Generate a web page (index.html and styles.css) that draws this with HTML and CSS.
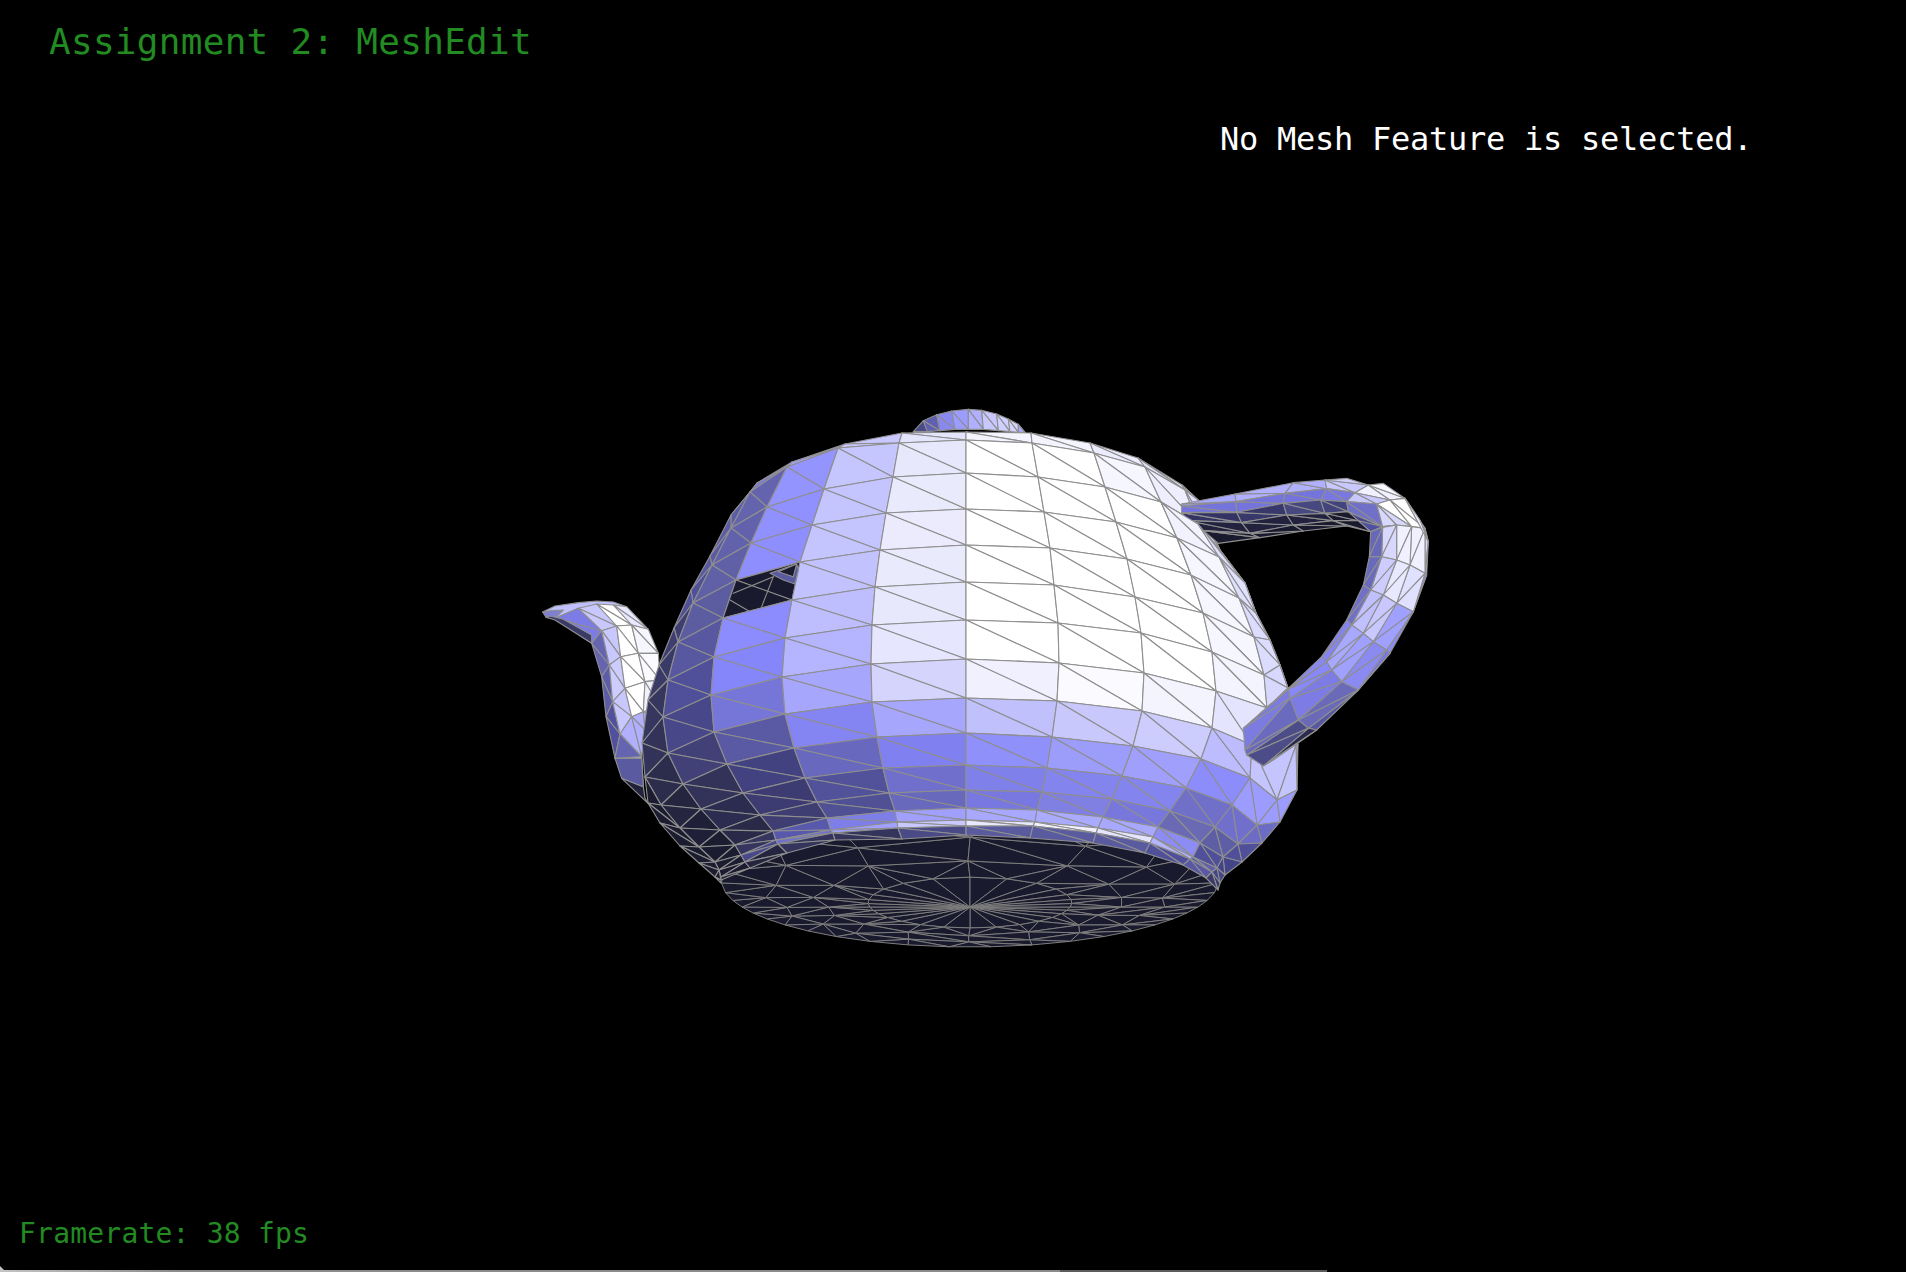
FILE: index.html
```html
<!doctype html>
<html lang="en">
  <head>
    <meta charset="UTF-8" />
    <title>Assignment 2: MeshEdit</title>
    <link rel="stylesheet" href="styles.css">
  </head>

  <body>
    <div class="viewer">
      <svg id="mesh" class="mesh" viewBox="0 0 1906 1272" aria-hidden="true"></svg>
      <div class="hud">
        <h1 class="title">Assignment 2: MeshEdit</h1>
        <p class="status">No Mesh Feature is selected.</p>
        <p class="fps">Framerate: 38 fps</p>
      </div>
      <div class="edge"></div>
    </div>
    <script src="mesh.js"></script>
  </body>
</html>
```

FILE: styles.css
```css
html,
body {
  margin: 0;
  background: #000;
}
.viewer {
  position: relative;
  width: 1906px;
  height: 1272px;
  overflow: hidden;
}
.mesh {
  position: absolute;
  top: 0;
  left: 0;
  width: 1906px;
  height: 1272px;
}
.mesh polygon {
  stroke: #8f8f8f;
  stroke-width: 1.1;
  stroke-linejoin: round;
}
.mesh .base {
  stroke: #7d7d7d;
  stroke-width: 1;
}
.hud {
  position: relative;
  display: flex;
  flex-direction: column;
  height: 1272px;
  box-sizing: border-box;
  padding: 20px 0 20px;
  font-family: "DejaVu Sans Mono", "Liberation Mono", monospace;
}
.title {
  margin: 0 0 0 49px;
  font-size: 36px;
  font-weight: normal;
  line-height: 44px;
  letter-spacing: 0.28px;
  color: #228b22;
}
.status {
  margin: 55px 0 0 1220px;
  font-size: 32px;
  line-height: 40px;
  letter-spacing: -0.26px;
  color: #fff;
}
.fps {
  margin: auto 0 0 19px;
  font-size: 28px;
  line-height: 36px;
  letter-spacing: 0.21px;
  color: #228b22;
}
.edge {
  position: absolute;
  left: 0;
  bottom: 0;
  width: 1327px;
  height: 2px;
  background: linear-gradient(to right, #c4c4c4, #8a8a8a 180px, #8a8a8a 1060px, #5c5c5c 1060px);
}
.edge::before {
  content: "";
  position: absolute;
  left: 0;
  bottom: 2px;
  border-left: 4px solid #c4c4c4;
  border-top: 4px solid transparent;
}
```

FILE: mesh.js
```js
// teapot drawn face by face, the way the viewer shows it
var svg = document.getElementById("mesh");

function poly(pts, fill, cls) {
  var el = document.createElementNS("http://www.w3.org/2000/svg", "polygon");
  el.setAttribute("points", pts.map(function (p) { return p[0] + "," + p[1]; }).join(" "));
  el.setAttribute("fill", fill);
  if (cls) el.setAttribute("class", cls);
  svg.appendChild(el);
}

function quad(a, b, c, d, fill) {
  poly([a, b, c], fill);
  poly([a, c, d], fill);
}

function drawGrid(grid, colors, rowFrom, rowTo, colFrom, colTo) {
  for (var r = rowFrom; r < rowTo; r++) {
    for (var c = colFrom; c < colTo; c++) {
      var fill = "#" + colors[r][c];
      quad(grid[r][c], grid[r][c + 1], grid[r + 1][c + 1], grid[r + 1][c], fill);
    }
  }
}

// crop coordinates (3x) -> page coordinates
function crop(ox, oy, list) {
  return list.map(function (p) { return [ox + p[0] / 3, oy + p[1] / 3]; });
}

/* ---- base disc ---- */
var CX = 970, CY = 907;
function ringPoint(t, th) {
  var s = t * Math.sin(th), c = t * Math.cos(th), k = 1 + 0.4 * s;
  return [CX + (228 * c) / k, CY + (56 * s) / k];
}
function ring(t, n, wobble) {
  var out = [];
  for (var i = 0; i < n; i++) {
    var th = (i / n) * Math.PI * 2;
    th = th - 0.2 * Math.sin(2 * th);
    var j = wobble * Math.sin(i * 12.9898) * 0.5;
    out.push(ringPoint(t + wobble * Math.cos(i * 78.233) * 0.35, th + j / 3));
  }
  return out;
}
function stitch(a, b) {
  var i = 0, j = 0;
  while (i < a.length || j < b.length) {
    var ai = a[i % a.length], bj = b[j % b.length];
    if (j >= b.length || (i < a.length && i / a.length <= j / b.length)) {
      poly([ai, a[(i + 1) % a.length], bj], "#1a1a2e", "base");
      i++;
    } else {
      poly([ai, b[(j + 1) % b.length], bj], "#1a1a2e", "base");
      j++;
    }
  }
}
var rings = [ring(0.44, 28, 0), ring(0.64, 16, 0.07), ring(0.83, 20, 0.07), ring(1, 34, 0)];
rings[0].forEach(function (p, i) {
  poly([[CX, CY], p, rings[0][(i + 1) % 28]], "#1a1a2e", "base");
});
stitch(rings[0], rings[1]);
stitch(rings[1], rings[2]);
stitch(rings[2], rings[3]);

/* ---- spout, behind the body ---- */
var sp = crop(530, 590, [
  [75, 85], [145, 55], [200, 42], [250, 45], [290, 50],
  [185, 160], [215, 122], [260, 108], [305, 105], [355, 118],
  [215, 260], [238, 225], [272, 200], [325, 190], [385, 190],
  [228, 380], [248, 335], [285, 295], [345, 275], [390, 270],
  [255, 505], [270, 432], [305, 380], [340, 365], [390, 350],
  [340, 625], [340, 590], [335, 500], [345, 420], [390, 400]
]);
var spoutGrid = [];
for (var i = 0; i < 6; i++) spoutGrid.push(sp.slice(i * 5, i * 5 + 5));
var spoutColors = [
  ["7c7ce4", "c8c8ff", "ffffff", "e8e8ff"],
  ["6464b0", "c8c8ff", "ffffff", "f6f6ff"],
  ["5c5ca8", "ccccff", "ffffff", "fafaff"],
  ["50509c", "c8c8ff", "ffffff", "f0f0ff"],
  ["5a5aa0", "b0b0ff", "b0b0ff", "b0b0ff"]
];
poly(crop(530, 590, [[38, 66], [75, 48], [145, 38], [200, 33], [250, 36], [290, 50], [145, 55], [75, 85]]), "#c0c0ff");
poly(crop(530, 590, [[38, 66], [48, 82], [75, 85], [100, 60], [60, 62]]), "#8080d0");
drawGrid(spoutGrid, spoutColors, 0, 5, 0, 4);
poly(crop(530, 590, [[48, 82], [75, 90], [185, 160], [185, 135], [100, 88], [60, 78]]), "#3a3a66");
poly(crop(530, 590, [[270, 432], [335, 500], [255, 505]]), "#6464b0");
poly(crop(530, 590, [[275, 565], [340, 590], [345, 625], [354, 640]]), "#22223c");
poly(crop(530, 590, [[255, 505], [335, 505], [340, 590], [275, 565]]), "#5a5aa0");

/* ---- lid knob ---- */
var knobTop = crop(840, 400, [[220, 95], [250, 62], [290, 44], [335, 33], [385, 28], [425, 31], [470, 42], [505, 57], [535, 73], [555, 97]]);
var knobBot = crop(840, 400, [[220, 97], [262, 95], [300, 92], [345, 88], [385, 88], [430, 88], [475, 92], [510, 95], [535, 97], [555, 97]]);
var knobFill = ["4a4a88", "6060b0", "8888f0", "9c9cff", "b0b0ff", "c8c8ff", "d0d0ff", "d4d4ff", "a8a8ff"];
for (var k = 0; k < 9; k++) {
  quad(knobTop[k], knobTop[k + 1], knobBot[k + 1], knobBot[k], "#" + knobFill[k]);
}

/* ---- body: 16 rings of 12 points, left silhouette to right silhouette ---- */
var cols = [
  [[732,515],[731,515],[710,556],[691,590],[674,628],[659,665],[648,700],[642,743],[645,777],[661,805],[680,828],[699,847],[715,862],[719,870],[721,877],[721,880]],
  [[757,483],[750,492],[731,528],[712,565],[693,603],[678,642],[668,680],[663,717],[668,753],[683,784],[701,809],[720,830],[735,845],[741,855],[745,862],[750,868]],
  [[792,462],[787,467],[767,507],[751,543],[736,580],[723,618],[714,657],[711,695],[714,732],[727,764],[743,793],[760,815],[773,831],[776,840],[778,844],[787,853]],
  [[845,444],[838,448],[824,489],[812,525],[800,562],[792,600],[785,638],[782,677],[785,714],[794,748],[805,778],[817,802],[827,818],[831,830],[833,833],[835,840]],
  [[902,433],[899,443],[893,477],[886,513],[880,550],[875,587],[872,625],[871,664],[872,702],[877,737],[883,768],[889,793],[895,811],[897,822],[898,828],[902,839]],
  [[966,432],[966,440],[966,473],[966,509],[966,545],[966,582],[966,620],[966,659],[966,698],[966,733],[966,765],[966,790],[966,808],[966,820],[966,826],[966,835]],
  [[1031,433],[1032,443],[1038,477],[1044,512],[1050,548],[1054,585],[1058,623],[1059,663],[1057,701],[1052,737],[1047,768],[1042,792],[1037,810],[1035,822],[1033,826],[1030,838]],
  [[1090,443],[1094,453],[1105,487],[1116,522],[1127,559],[1135,597],[1141,633],[1144,673],[1142,711],[1133,746],[1122,776],[1112,799],[1103,817],[1098,828],[1096,833],[1093,843]],
  [[1138,458],[1145,467],[1161,502],[1177,538],[1191,575],[1203,613],[1212,652],[1216,691],[1212,728],[1201,759],[1186,788],[1170,811],[1158,827],[1153,837],[1150,843],[1145,853]],
  [[1182,485],[1185,490],[1198,524],[1219,557],[1239,598],[1254,637],[1264,675],[1267,708],[1252,745],[1250,778],[1232,805],[1215,827],[1200,843],[1193,857],[1190,859],[1183,865]],
  [[1198,500],[1198,500],[1220,550],[1245,583],[1256,613],[1270,640],[1280,665],[1288,688],[1296,745],[1277,800],[1257,825],[1238,844],[1223,857],[1217,868],[1212,872],[1206,878]],
  [[1198,500],[1198,500],[1220,550],[1245,583],[1256,613],[1270,640],[1280,665],[1288,688],[1298,745],[1297,790],[1280,822],[1262,843],[1242,862],[1225,875],[1220,883],[1218,890]]
];
var grid = [];
for (var r = 0; r < 16; r++) {
  grid.push(cols.map(function (col) { return col[r]; }));
}
var shades = [
  ["5f5fa8","7c7cd6","a2a2ff","c8c8ff","e4e4fd","f4f4ff","f4f4ff","ececff","e4e4ff","d8d8ff","d8d8ff"],
  ["5c5ca6","6464ae","9494ff","c6c6ff","e8e8fd","ffffff","ffffff","f6f6ff","eeeeff","e0e0ff","e0e0ff"],
  ["5a5aa4","6262ac","9090ff","c4c4ff","eaeafd","ffffff","ffffff","ffffff","f2f2ff","dedeff","dedeff"],
  ["50509a","6060a6","8e8eff","c4c4ff","ebebfd","ffffff","ffffff","ffffff","f6f6ff","e0e0ff","e0e0ff"],
  ["3e3e72","5c5ca0","1a1a2e","c2c2ff","eaeafd","ffffff","ffffff","ffffff","f6f6ff","dcdcff","dcdcff"],
  ["3a3a68","5858a0","8c8cff","bebeff","e8e8fd","ffffff","ffffff","ffffff","f6f6ff","dcdcff","dcdcff"],
  ["36365f","50509a","8686fb","b4b4ff","e6e6fe","ffffff","ffffff","ffffff","f4f4ff","d8d8ff","d8d8ff"],
  ["33335a","47478a","7676d8","a6a6fc","d4d4fc","f0f0ff","fafaff","f4f4ff","e4e4ff","d4d4ff","d4d4ff"],
  ["2c2c4c","414178","5a5aa4","8484f2","a6a6fc","c0c0fc","c8c8fd","ccccfd","bcbcff","c4c4ff","c4c4ff"],
  ["25253f","33335a","424280","6868be","8080f0","9090fa","9c9cfa","a0a0fc","8c8cfb","9c9cff","9c9cff"],
  ["1f1f38","2c2c50","3c3c72","52529a","7070cc","8080ea","8484ee","8484ee","7070c8","7070cc","6c6cc4"],
  ["1c1c30","2a2a48","3e3e72","505094","6868bc","7878e0","8080e2","7878dc","6a6ab4","5e5ea4","50509a"],
  ["1c1c30","353560","5858ac","7e7ee8","a0a0fc","a8a8ff","aaaaff","a8a8ff","8c8cf4","50509a","444488"],
  ["1c1c30","48488a","7070c8","a0a0ff","c8c8ff","e8e8ff","f0f0ff","e4e4ff","b4b4ff","6060aa","444488"],
  ["1c1c30","252540","34345c","34345c","4a4a86","5a5a9e","5a5a9e","5a5a9e","50509a","5858a4","3a3a6a"]
];
drawGrid(grid, shades, 0, 15, 0, 11);

// lower left lip outside the body's outermost ring
var lipOuter = [[645,777],[648,803],[660,823],[680,846],[699,863],[715,877],[721,883]];
var lipInner = [[645,777],[661,805],[680,828],[699,847],[715,862],[719,870],[721,880]];
for (var m = 0; m < 6; m++) {
  quad(lipOuter[m], lipInner[m], lipInner[m + 1], lipOuter[m + 1], "#1c1c30");
}

// the far wall seen through the missing faces
[[[610, 580], [730, 530]], [[695, 620], [730, 530]], [[655, 632], [600, 600]]].forEach(function (l) {
  poly(crop(530, 400, l), "none");
});
poly(crop(530, 400, [[720, 520], [800, 492], [805, 510], [795, 552], [760, 540]]), "#5a5aa0");
poly(crop(530, 400, [[745, 515], [800, 492], [790, 530]]), "#1a1a2e");

/* ---- handle ---- */
var handle = [
  [[695,312],[695,318],[695,338],[715,362],[760,392],[805,430]],
  [[855,282],[858,305],[860,337],[875,368],[900,400],[930,413]],
  [[1030,248],[1005,280],[1000,310],[1010,345],[1030,375],[1060,393]],
  [[1125,240],[1130,266],[1112,300],[1125,340],[1150,362],[1190,378]],
  [[1255,255],[1215,278],[1190,305],[1195,335],[1225,362],[1262,395]],
  [[1365,295],[1320,300],[1280,312],[1298,380],[1298,380],[1262,395]],
  [[1435,425],[1425,385],[1385,380],[1340,375],[1298,382],[1262,395]],
  [[1430,525],[1425,520],[1380,495],[1340,480],[1295,470],[1258,470]],
  [[1390,635],[1390,635],[1340,610],[1300,585],[1262,570],[1240,555]],
  [[1320,760],[1310,750],[1270,725],[1240,700],[1205,675],[1190,660]],
  [[1225,870],[1225,870],[1175,845],[1145,810],[1130,785],[1115,770]],
  [[1100,990],[1075,985],[1045,960],[1020,895],[1015,868],[1015,865]],
  [[970,1080],[940,1098],[890,1065],[885,1050],[880,985],[880,985]]
].map(function (row) { return crop(950, 400, row); });
var handleShades = [
  ["a8a8ff","7474dc","343464","22223e","1a1a2e"],
  ["b0b0ff","7474dc","38386a","22223e","1a1a2e"],
  ["b0b0ff","7474dc","484880","22223e","1a1a2e"],
  ["c8c8ff","7878e0","44447c","1a1a2e","1a1a2e"],
  ["f0f0ff","c8c8ff","7070c8","4a4a8a","5050a0"],
  ["ffffff","ffffff","d8d8ff","6a6abc","6a6abc"],
  ["d8d8ff","f0f0ff","f0f0ff","d8d8ff","6868b8"],
  ["9090ff","e0e0ff","e8e8ff","ccccff","6a6abc"],
  ["8c8cf8","a0a0ff","c8c8ff","c0c0ff","7070c8"],
  ["7878e0","8a8af0","a0a0ff","a8a8ff","8484f0"],
  ["5858a0","6a6ab8","7c7ce4","8888f8","8888f0"],
  ["2a2a4c","4c4c88","6a6abe","7c7ce0","8888f4"]
];
drawGrid(handle, handleShades, 0, 12, 0, 5);

// rounding of the grip's outer corner
poly(crop(950, 400, [[1125, 240], [1190, 235], [1255, 255]]), "#d0d0ff");
poly(crop(950, 400, [[1255, 255], [1300, 250], [1365, 295]]), "#f8f8ff");
poly(crop(950, 400, [[1365, 295], [1410, 360], [1435, 425]]), "#e8e8ff");

// the shoulder of the body passes in front of the handle's upper root
drawGrid(grid, shades, 2, 4, 8, 10);
```
